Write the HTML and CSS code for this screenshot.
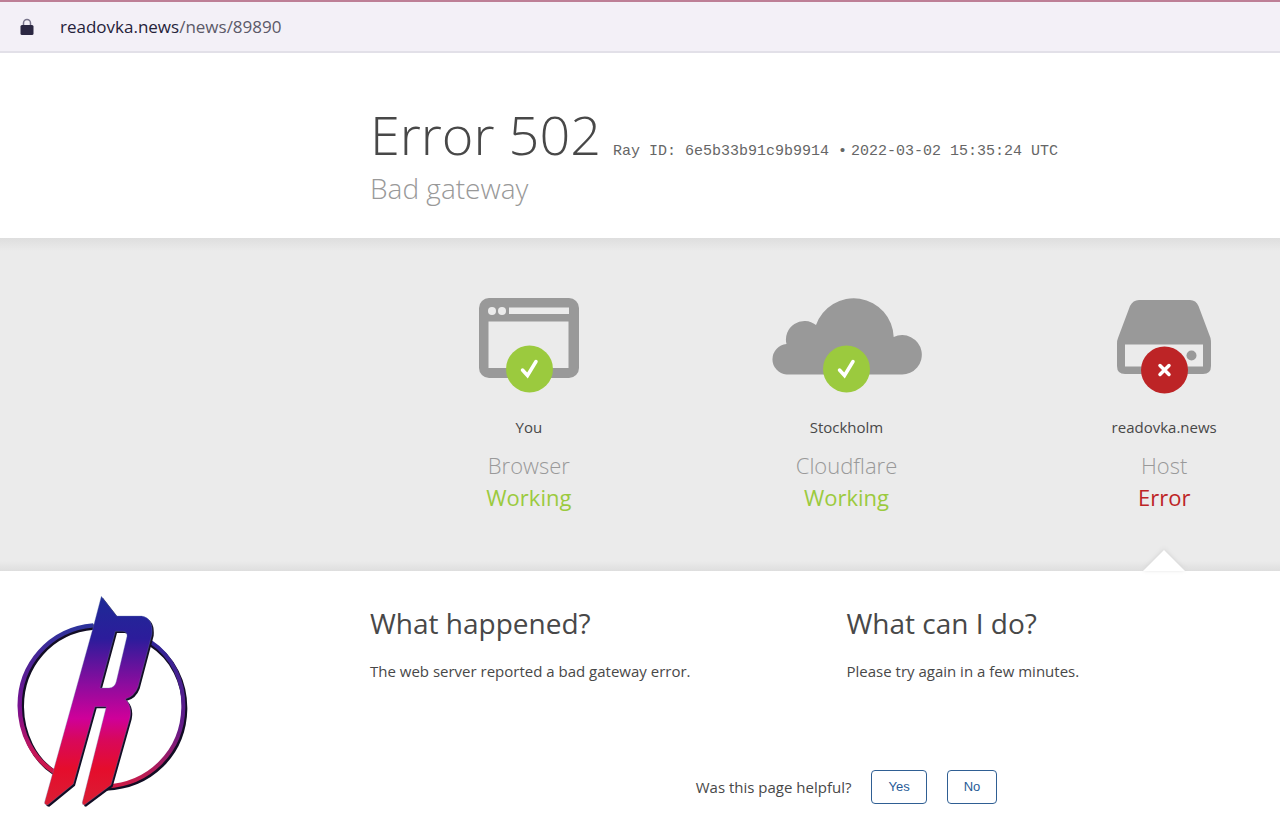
FILE: index.html
```html
<!DOCTYPE html>
<html lang="en">
<head>
<meta charset="utf-8">
<title>readovka.news | 502: Bad gateway</title>
<link rel="stylesheet" href="styles.css">
</head>
<body>
<div class="address-bar">
  <svg class="lock" viewBox="0 0 14 18" aria-hidden="true">
    <path d="M3.5 9V5a3.5 3.5 0 0 1 7 0v4" fill="none" stroke="#77738a" stroke-width="1.5"/>
    <rect x="0.5" y="7" width="13" height="10" rx="1.5" fill="#2b2742"/>
  </svg>
  <span class="url"><span class="domain">readovka.news</span>/news/89890</span>
</div>

<header class="heading indent">
  <h1 class="title">
    <span class="code">Error 502</span>
    <span class="ray">Ray ID: 6e5b33b91c9b9914 &bull;</span>
    <span class="ray">2022-03-02 15:35:24 UTC</span>
  </h1>
  <h2 class="subtitle">Bad gateway</h2>
</header>

<section class="status indent">
  <div class="nodes">
    <div class="node">
      <svg class="picture" viewBox="0 0 160 100" aria-hidden="true">
        <rect x="30" y="3" width="100" height="80" rx="10" fill="#999"/>
        <rect x="39.500" y="26.500" width="80" height="46.500" fill="#ebebeb"/>
        <circle cx="43" cy="16" r="4" fill="#ebebeb"/><circle cx="53" cy="16" r="4" fill="#ebebeb"/>
        <rect x="60" y="12.500" width="60" height="6.500" fill="#ebebeb"/>
        <circle cx="80.500" cy="74" r="23.500" fill="#9bca3e"/>
        <path d="M73.500 75l5 5.500 8.500-14" fill="none" stroke="#fff" stroke-width="3.500" stroke-linecap="round"/>
      </svg>
      <span class="place">You</span>
      <h3 class="role">Browser</h3>
      <span class="state working">Working</span>
    </div>
    <div class="node">
      <svg class="picture" viewBox="0 0 160 100" aria-hidden="true">
        <path d="M20.500 79.500A15.300 15.300 0 0 1 20.500 49 18.500 18.500 0 0 1 50 30 40 40 0 0 1 127.700 42 19.700 19.700 0 1 1 135.400 79.500z" fill="#999"/>
        <circle cx="80.500" cy="74" r="23.500" fill="#9bca3e"/>
        <path d="M73.500 75l5 5.500 8.500-14" fill="none" stroke="#fff" stroke-width="3.500" stroke-linecap="round"/>
      </svg>
      <span class="place">Stockholm</span>
      <h3 class="role">Cloudflare</h3>
      <span class="state working">Working</span>
    </div>
    <div class="node">
      <svg class="picture" viewBox="0 0 160 100" aria-hidden="true">
        <path d="M55 5h51q6 0 8.500 6l12 32q.5 2 .5 6v22q0 8-8 8H41q-8 0-8-8V49q0-4 1-6l12-32q3-6 9-6z" fill="#999"/>
        <rect x="41" y="49.500" width="78" height="22" fill="#ebebeb"/>
        <circle cx="107.500" cy="60.500" r="5" fill="#999"/>
        <circle cx="80.500" cy="75" r="23.500" fill="#bd2426"/>
        <path d="M76 70.500l9 9m0-9l-9 9" stroke="#fff" stroke-width="3.500" stroke-linecap="round"/>
      </svg>
      <span class="place">readovka.news</span>
      <h3 class="role">Host</h3>
      <span class="state failed">Error</span>
      <svg class="pointer" viewBox="0 0 42 21" aria-hidden="true"><path d="M0 21L21 0l21 21z" fill="#fff"/></svg>
    </div>
  </div>
</section>

<main class="details">
  <svg class="logo" viewBox="0 0 630 720" role="img" aria-label="Readovka">
    <defs>
      <linearGradient id="letter" gradientUnits="userSpaceOnUse" x1="0" y1="35" x2="0" y2="665">
        <stop offset="0" stop-color="#1d2b96"/><stop offset=".2" stop-color="#2c1c9b"/>
        <stop offset=".42" stop-color="#8d0c9e"/><stop offset=".58" stop-color="#cf0099"/>
        <stop offset=".68" stop-color="#d8085c"/><stop offset=".82" stop-color="#e50d2c"/><stop offset="1" stop-color="#d91f35"/>
      </linearGradient>
      <linearGradient id="ring" gradientUnits="userSpaceOnUse" x1="210" y1="115" x2="250" y2="610">
        <stop offset="0" stop-color="#29349c"/><stop offset=".48" stop-color="#781090"/>
        <stop offset=".75" stop-color="#c3165c"/><stop offset="1" stop-color="#db1736"/>
      </linearGradient>
      <linearGradient id="arc" gradientUnits="userSpaceOnUse" x1="0" y1="165" x2="0" y2="610">
        <stop offset="0" stop-color="#2f2598"/><stop offset=".6" stop-color="#661b88"/><stop offset="1" stop-color="#d21c45"/>
      </linearGradient>
    </defs>
    <g fill="none">
      <path d="M282 126C150 137 63 244 64 366C65 448 103 525 164 563" stroke="#120d24" stroke-width="16"/>
      <path d="M280 121C148 132 58 240 59 363C60 446 99 521 161 560" stroke="url(#ring)" stroke-width="13"/>
      <path d="M450 175C520 219 555 294 554 373C551 508 449 604 318 609" stroke="#120d24" stroke-width="16"/>
      <path d="M450 169C519 214 552 290 550 368C547 502 446 598 318 604" stroke="url(#arc)" stroke-width="12"/>
    </g>
    <g fill-rule="evenodd">
      <path transform="translate(5 5)" fill="#120d24" d="M304 34L350 93H425Q460 98 456 147L414 306Q403 335 376 342Q397 363 390 398L333 600L253 660Q246 660 247 652L319 365H285L220 597L143 660Q132 660 134 651L160 558L279 129ZM346 139L300 309H327Q345 308 349 289L381 154Q382 140 369 139Z"/>
      <path fill="url(#letter)" stroke="#7182b6" stroke-width="1" d="M304 34L350 93H425Q460 98 456 147L414 306Q403 335 376 342Q397 363 390 398L333 600L253 660Q246 660 247 652L319 365H285L220 597L143 660Q132 660 134 651L160 558L279 129ZM346 139L300 309H327Q345 308 349 289L381 154Q382 140 369 139Z"/>
    </g>
  </svg>
  <div class="columns">
    <section class="column">
      <h2 class="question">What happened?</h2>
      <p class="answer">The web server reported a bad gateway error.</p>
    </section>
    <section class="column">
      <h2 class="question">What can I do?</h2>
      <p class="answer">Please try again in a few minutes.</p>
    </section>
    <div class="feedback">
      <span class="prompt">Was this page helpful?</span>
      <button class="choice" type="button">Yes</button>
      <button class="choice" type="button">No</button>
    </div>
  </div>
</main>
</body>
</html>
```
FILE: styles.css
```css
* { box-sizing: border-box; }
body {
  margin: 0;
  overflow-x: hidden;
  background: #fff;
  color: #484848;
  font-family: "Open Sans", "Noto Sans", sans-serif;
  font-size: 15px;
  line-height: 24px;
}
h1, h2, h3, p { margin: 0; font-weight: 300; }

.address-bar {
  display: flex;
  align-items: center;
  gap: 26px;
  padding: 13px 20px 12px;
  border-top: 2px solid #bd7f96;
  border-bottom: 2px solid #e2e0e8;
  background: #f3f0f7;
}
.lock { width: 14px; height: 18px; }
.url { color: #5b5968; font-size: 17px; }
.domain { color: #25223a; }

.indent { padding-left: 370px; }
.heading { padding-top: 45px; padding-bottom: 32px; }
.title {
  display: flex;
  align-items: baseline;
  white-space: nowrap;
}
.code { margin-right: 12px; font-size: 54px; line-height: 72px; }
.ray {
  margin-right: 4px;
  color: #666;
  font: 400 15px/24px "Liberation Mono", monospace;
}
.subtitle { color: #999; font-size: 28px; line-height: 36px; }

.status {
  background: linear-gradient(#dedede, #ebebeb 4%, #ebebeb 97%, #dedede);
}
.nodes {
  display: grid;
  grid-template-columns: repeat(3, 1fr);
  width: 953px;
}
.node {
  position: relative;
  display: flex;
  flex-direction: column;
  align-items: center;
  padding: 57px 0 58px;
}
.picture { width: 160px; height: 100px; margin-bottom: 20px; }
.role { margin-top: 10px; color: #999; font-size: 22px; line-height: 32px; }
.state { font-size: 22px; line-height: 32px; }
.working { color: #9bca3e; }
.failed { color: #bd2426; }
.pointer {
  position: absolute;
  bottom: 0;
  width: 42px;
  height: 21px;
  filter: drop-shadow(0 -1px 2px #d4d4d4);
}

.details { display: flex; align-items: flex-start; padding-top: 14px; }
.logo { flex: none; width: 210px; height: 240px; margin-right: 160px; }
.columns {
  display: grid;
  flex: none;
  grid-template-columns: 1fr 1fr;
  width: 953px;
  padding-top: 18px;
}
.question { font-size: 28px; font-weight: 400; line-height: 40px; }
.answer { margin-top: 16px; font-weight: 400; }
.feedback {
  display: flex;
  grid-column: 1 / -1;
  align-items: center;
  justify-content: center;
  gap: 20px;
  margin-top: 87px;
}
.choice {
  padding: 8px 16px;
  border: 1px solid #2f5f93;
  border-radius: 4px;
  background: #fff;
  color: #285b97;
  font: 13px/16px "Liberation Sans", Arial, sans-serif;
}
```
